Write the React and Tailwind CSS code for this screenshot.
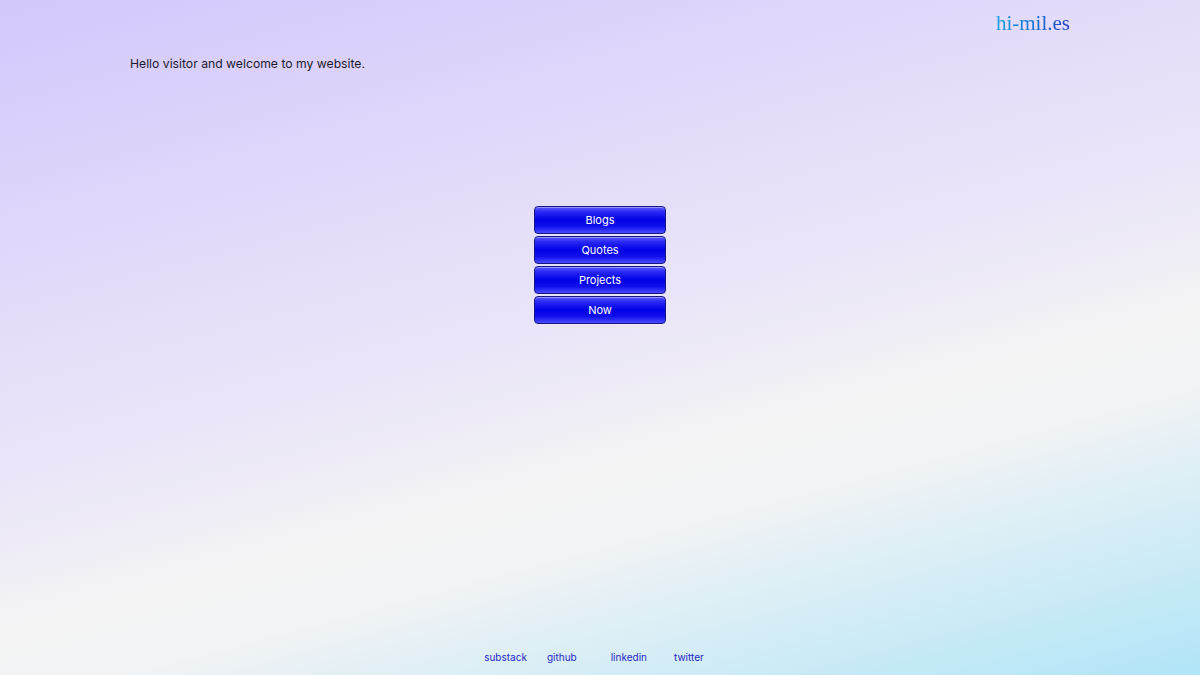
export default function App() {
  const links = ["Blogs", "Quotes", "Projects", "Now"];
  return (
    <div
      className="min-h-screen w-full flex flex-col bg-[linear-gradient(165deg,#d3c7fc_0%,#e2dbfa_30%,#ebe7f8_50%,#f4f4f4_64%,#f1f3f5_71%,#b0e5f7_100%)]"
      style={{ fontFamily: "Inter, 'Noto Sans', sans-serif" }}
    >
      {/* header */}
      <div className="px-[130px] pt-[10px] flex justify-end">
        <a
          className="text-[21px] leading-[26px] bg-gradient-to-r from-[#1ba3dc] to-[#1f3fc4] bg-clip-text text-transparent"
          style={{ fontFamily: "'Liberation Serif', 'Times New Roman', serif" }}
        >
          hi-mil.es
        </a>
      </div>

      <div className="px-[130px] pt-[19px]">
        <p className="text-[12.2px] leading-[17px] text-[#1c1a2e]">
          Hello visitor and welcome to my website.
        </p>
      </div>

      {/* nav */}
      <div className="flex flex-col items-center gap-[2px] mt-[134px]">
        {links.map((l) => (
          <button
            key={l}
            className="w-[132px] h-[28px] rounded-[4px] border border-[#171784] text-white text-[11px] shadow-[inset_0_1px_0_rgba(255,255,255,0.35)] bg-[linear-gradient(180deg,#5b5bff_0%,#2a2af5_18%,#0000e6_50%,#1010ee_75%,#4a4aff_100%)]"
          >
            {l}
          </button>
        ))}
      </div>

      <div className="flex-1" />

      {/* footer */}
      <footer className="flex justify-center pb-[11px] text-[10px] leading-[14px] text-[#2626c4]">
        <a className="ml-[-12px]">substack</a>
        <a className="ml-[20px]">github</a>
        <a className="ml-[34px]">linkedin</a>
        <a className="ml-[27px]">twitter</a>
      </footer>
    </div>
  );
}
